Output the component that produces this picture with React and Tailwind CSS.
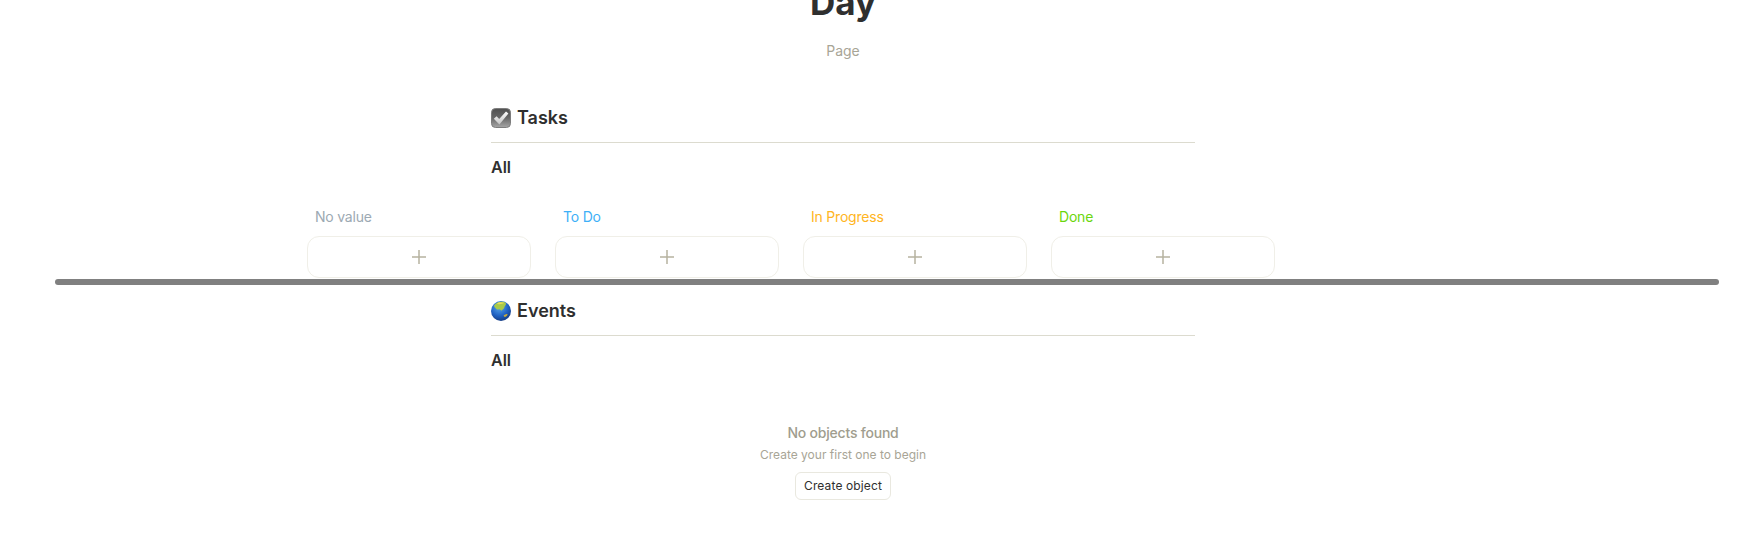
import React from "react";

const columns = [
  { name: "No value", color: "text-[#9ca9b3]" },
  { name: "To Do", color: "text-[#3eb0f7]" },
  { name: "In Progress", color: "text-[#ffb522]" },
  { name: "Done", color: "text-[#6bd60d]" },
];

const CheckIcon = () => (
  <svg width="20" height="20" viewBox="0 0 20 20" className="shrink-0">
    <defs>
      <linearGradient id="boxFill" x1="0" y1="0" x2="0" y2="1">
        <stop offset="0" stopColor="#505050" />
        <stop offset="0.5" stopColor="#686868" />
        <stop offset="1" stopColor="#a6a6a6" />
      </linearGradient>
      <linearGradient id="tickFill" x1="0" y1="0" x2="0" y2="1">
        <stop offset="0" stopColor="#ffffff" />
        <stop offset="1" stopColor="#c4c4c4" />
      </linearGradient>
    </defs>
    <rect x="0.5" y="0.5" width="19" height="19" rx="4" fill="url(#boxFill)" stroke="#7d7d7d" />
    <path d="M2.8 10.8 L5.6 8.2 L8.2 11 L15 3.4 L17.4 5.4 L8.4 16.4 Z" fill="url(#tickFill)" />
  </svg>
);

const GlobeIcon = () => (
  <svg width="20" height="20" viewBox="0 0 20 20" className="shrink-0">
    <defs>
      <radialGradient id="sea" cx="0.42" cy="0.3" r="0.8">
        <stop offset="0" stopColor="#5aa9ec" />
        <stop offset="0.55" stopColor="#1f62c4" />
        <stop offset="1" stopColor="#12306f" />
      </radialGradient>
    </defs>
    <circle cx="10" cy="10" r="10" fill="url(#sea)" />
    <path d="M3 4.5 C5 1.5 9 0 13 1 C15 1.6 15.5 3 14.5 4.2 C13.5 5 13.5 6.5 12.8 7.5 C12 8.8 10.8 8.6 10.3 10 C9.8 9 9.2 8.2 8.2 8.2 C7 8.2 6.4 9 5.4 8 C4.4 7 3.2 6.4 3 4.5 Z" fill="#a8c94a" />
    <path d="M6 2.2 C8 1 11 1 13 1.8 C12 3 9.5 3.4 7.8 3.2 C7 3 6.4 2.8 6 2.2 Z" fill="#e8dc5a" />
    <path d="M12.6 14.6 C13.6 13.4 15.4 12.6 16.4 13 C16.8 14 15.8 15.4 14.6 15.8 C13.6 16.2 12.8 15.6 12.6 14.6 Z" fill="#c2a83e" />
  </svg>
);

const PlusIcon = () => (
  <svg width="14" height="14" viewBox="0 0 14 14" className="text-[#b6b3a0]">
    <path d="M7 0V14M0 7H14" stroke="currentColor" strokeWidth="1.5" />
  </svg>
);

const SectionHead = ({ icon, title }) => (
  <>
    <div className="flex h-5 items-center gap-1.5 text-lg leading-5 font-semibold text-[#2f2f2f]">
      {icon}
      <span>{title}</span>
    </div>
    <div className="mt-3.5 h-px bg-[#dcdbcf]" />
    <div className="mt-3.5 text-base leading-5 font-semibold text-[#2f2f2f]">All</div>
  </>
);

export default function App() {
  return (
    <div className="relative h-[548px] overflow-hidden bg-white font-['Inter',sans-serif]">
      <div className="pr-[60px]">
        <div className="mx-auto w-[704px]">
          {/* ===== TITLE ===== */}
          <h1 className="-mt-5 text-center text-[35px] leading-[44px] font-bold text-[#2f2f2f]">Day</h1>
          <p className="mt-[17px] text-center text-sm leading-5 text-[#a8a596]">Page</p>

          {/* ===== TASKS ===== */}
          <div className="mt-[47px]">
            <SectionHead icon={<CheckIcon />} title="Tasks" />
          </div>

          {/* board columns stick out of the page width */}
          <div className="mt-[30px] -ml-[184px] flex w-[1064px] gap-6">
            {columns.map((col) => (
              <div key={col.name} className="w-56">
                <div className={`h-5 pl-2 text-sm leading-5 tracking-[-0.015em] ${col.color}`}>{col.name}</div>
                <button className="mt-[9px] flex h-[42px] w-full items-center justify-center rounded-xl border border-[#f0efe8] bg-white">
                  <PlusIcon />
                </button>
              </div>
            ))}
          </div>

          {/* ===== EVENTS ===== */}
          <div className="mt-[23px]">
            <SectionHead icon={<GlobeIcon />} title="Events" />
          </div>

          {/* ===== EMPTY STATE ===== */}
          <div className="mt-[53px] flex flex-col items-center">
            <div className="text-sm leading-5 font-medium tracking-[-0.015em] text-[#a09d8e]">No objects found</div>
            <div className="mt-0.5 text-xs leading-5 text-[#a8a596]">Create your first one to begin</div>
            <button className="mt-[7px] h-7 w-24 rounded-md border border-[#e9e8df] bg-white text-xs tracking-[0.01em] text-[#2f2f2f]">
              Create object
            </button>
          </div>
        </div>
      </div>

      {/* horizontal scrollbar over the board */}
      <div className="absolute top-[279px] left-[55px] h-1.5 w-[1664px] rounded-full bg-[#808080]" />
    </div>
  );
}
